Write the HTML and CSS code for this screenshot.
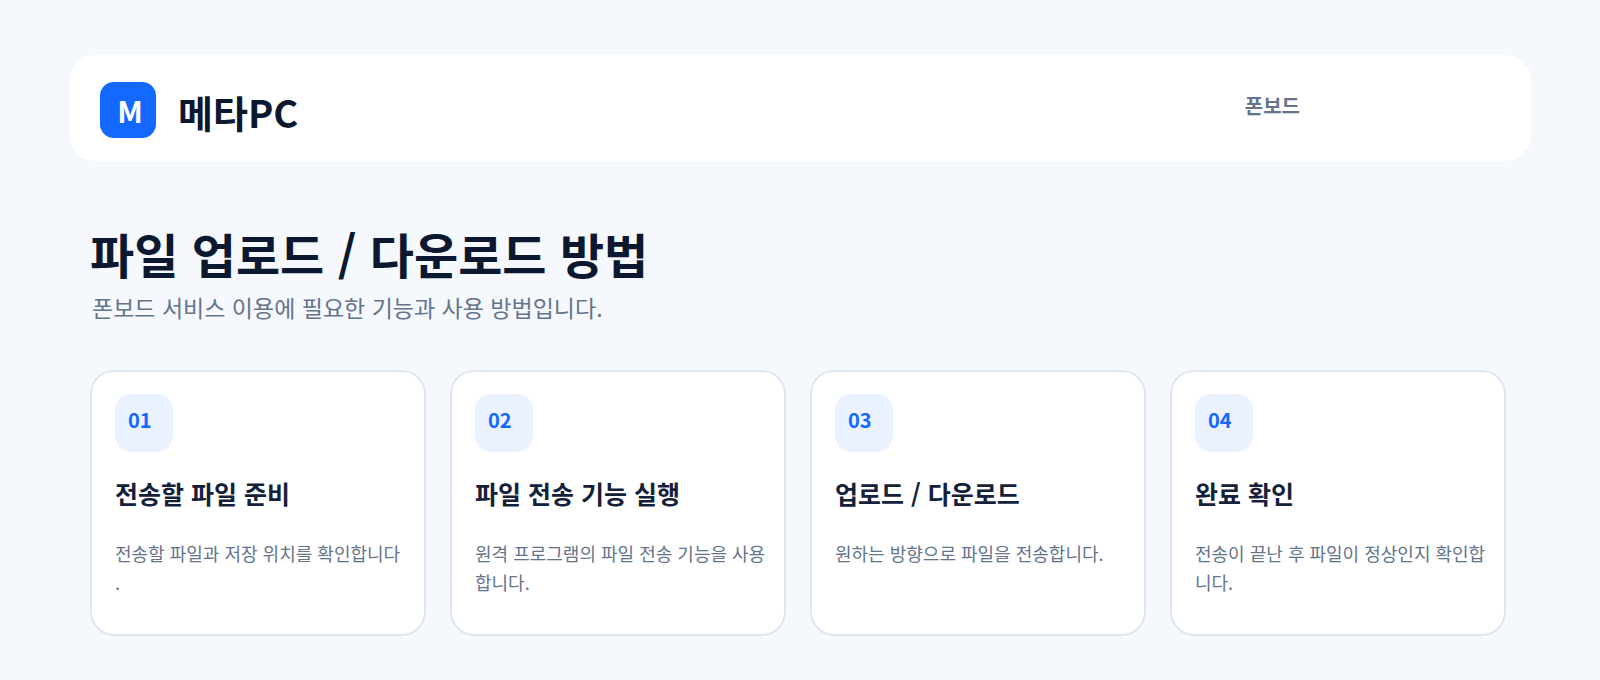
FILE: index.html
```html
<!DOCTYPE html>
<html lang="ko">
<head>
    <meta charset="UTF-8">
    <meta name="viewport" content="width=device-width, initial-scale=1.0">
    <title>메타PC - 파일 업로드 / 다운로드 방법</title>
    <link rel="stylesheet" href="styles.css">
</head>
<body>
    <header class="header">
        <div class="brand">
            <span class="logo">M</span>
            <span class="brand-name">메타PC</span>
        </div>
        <span class="section-name">폰보드</span>
    </header>

    <main class="main">
        <h1>파일 업로드 / 다운로드 방법</h1>
        <p class="lead">폰보드 서비스 이용에 필요한 기능과 사용 방법입니다.</p>

        <div class="steps">
            <section class="step">
                <span class="number">01</span>
                <h2>전송할 파일 준비</h2>
                <p>전송할 파일과 저장 위치를 확인합니다<br>.</p>
            </section>
            <section class="step">
                <span class="number">02</span>
                <h2>파일 전송 기능 실행</h2>
                <p>원격 프로그램의 파일 전송 기능을 사용합니다.</p>
            </section>
            <section class="step">
                <span class="number">03</span>
                <h2>업로드 / 다운로드</h2>
                <p>원하는 방향으로 파일을 전송합니다.</p>
            </section>
            <section class="step">
                <span class="number">04</span>
                <h2>완료 확인</h2>
                <p>전송이 끝난 후 파일이 정상인지 확인합니다.</p>
            </section>
        </div>
    </main>
</body>
</html>
```
FILE: styles.css
```css
* {
    box-sizing: border-box;
}

body {
    font-family: "Noto Sans CJK KR", sans-serif;
    margin: 0;
    padding: 55px 69px 44px 70px;
    background-color: #f5f8fd;
    color: #0c1830;
}

.header {
    display: flex;
    justify-content: space-between;
    align-items: flex-start;
    padding: 27px 231px 19px 30px;
    background-color: white;
    border-radius: 26px;
}

.brand {
    display: flex;
    gap: 22px;
}

.logo {
    width: 56px;
    height: 56px;
    padding-left: 4px;
    border-radius: 14px;
    background-color: #1268ff;
    color: white;
    font-size: 30px;
    font-weight: bold;
    line-height: 56px;
    text-align: center;
}

.brand-name {
    font-size: 38px;
    font-weight: bold;
    line-height: 60px;
}

.section-name {
    color: #64748b;
    font-size: 20px;
    font-weight: bold;
    line-height: 48px;
}

.main {
    padding: 56px 25px 0 20px;
}

h1 {
    margin: 0;
    font-size: 48px;
    font-weight: bold;
    line-height: 72px;
}

.lead {
    margin: 0;
    padding-left: 2px;
    color: #64748b;
    font-size: 23px;
    line-height: 36px;
}

.steps {
    display: grid;
    grid-template-columns: repeat(4, 1fr);
    gap: 24px;
    margin-top: 45px;
}

.step {
    min-height: 266px;
    padding: 22px 16px 22px 23px;
    border: 2px solid #dfe7f2;
    border-radius: 24px;
    background-color: white;
}

.number {
    display: block;
    width: 58px;
    height: 58px;
    padding-left: 13px;
    border-radius: 16px;
    background-color: #eaf2ff;
    color: #1268ff;
    font-size: 20px;
    font-weight: bold;
    line-height: 52px;
}

.step h2 {
    margin: 22px 0 0;
    color: #14213a;
    font-size: 25px;
    font-weight: bold;
    line-height: 38px;
}

.step p {
    margin: 27px 0 0;
    color: #64748b;
    font-size: 18px;
    line-height: 29px;
    word-break: break-all;
}
```
